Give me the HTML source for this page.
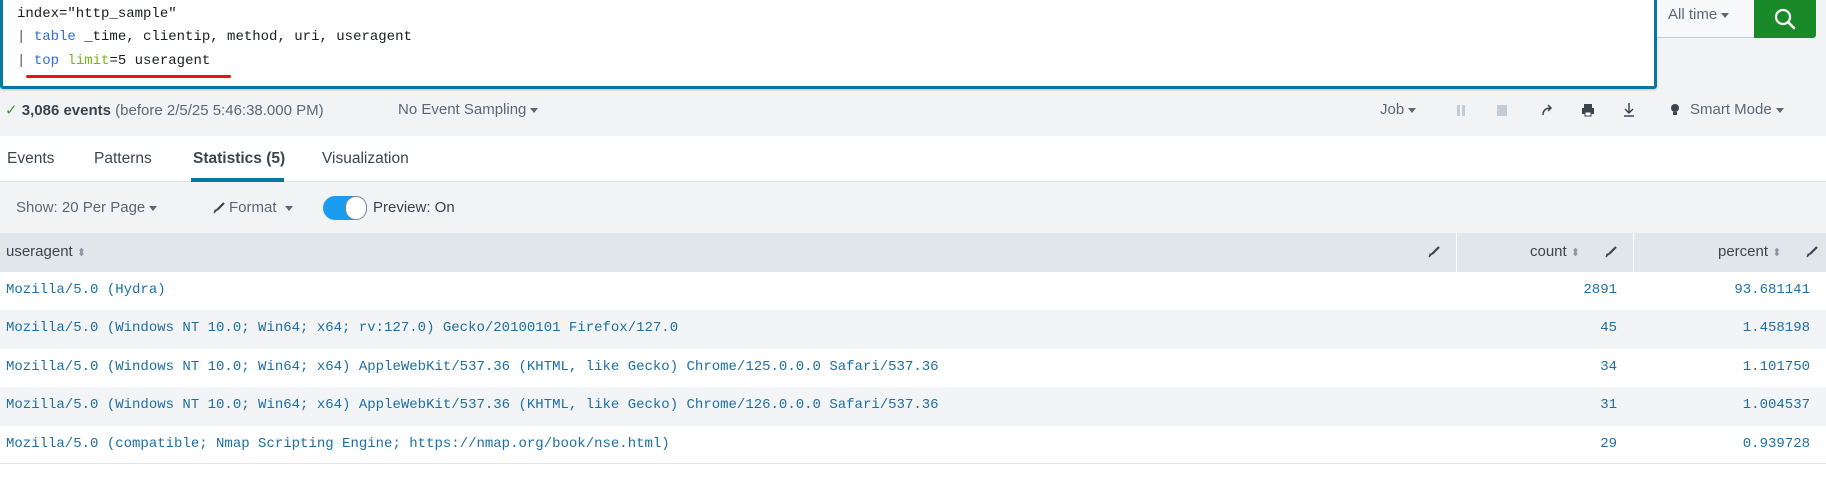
<!DOCTYPE html>
<html><head><meta charset="utf-8"><style>
*{box-sizing:border-box;margin:0;padding:0}
body{width:1826px;height:488px;overflow:hidden;background:#fff;font-family:"Liberation Sans",sans-serif;color:#3c444d;position:relative}
.abs{position:absolute;white-space:nowrap}
.mono{font-family:"Liberation Mono",monospace}
#top{position:absolute;left:0;top:0;width:1826px;height:136px;background:#f2f3f5}
#box{position:absolute;left:0;top:-4px;width:1657px;height:93px;background:#fff;border:3px solid #0877a6;border-radius:3px;box-shadow:0 1px 2px rgba(0,0,0,.2)}
.code{font-size:14px;color:#1a1c1e}
#tabs{position:absolute;top:136px;left:0;width:1826px;height:46px;background:#fff;border-bottom:1px solid #dfe3e6}
#tb{position:absolute;top:182px;left:0;width:1826px;height:51px;background:#f2f3f5}
#hdr{position:absolute;top:233px;left:0;width:1826px;height:39px;background:#e1e6eb}
.row{position:absolute;left:0;width:1826px;height:38.4px}
.alt{background:#f2f4f5}
.cell{font-family:"Liberation Mono",monospace;font-size:14px;color:#1d6fa5;position:absolute;top:10px}
.caret{display:inline-block;width:0;height:0;border-left:4px solid transparent;border-right:4px solid transparent;border-top:5px solid #3c444d;vertical-align:middle;margin-left:4px}
</style></head><body>
<div id="top"></div>
<div id="box"></div>
<div class="abs mono code" style="left:17px;top:6px">index="http_sample"</div>
<div class="abs mono code" style="left:17px;top:29px"><span style="color:#555">|</span> <span style="color:#2f6ed8">table</span> _time, clientip, method, uri, useragent</div>
<div class="abs mono code" style="left:17px;top:53px"><span style="color:#555">|</span> <span style="color:#2f6ed8">top</span> <span style="color:#7bb617">limit</span>=5 useragent</div>
<div class="abs" style="left:26px;top:75px;width:205px;height:3px;background:#ee1111;border-radius:2px"></div>
<div class="abs" style="left:1657px;top:0;width:97px;height:38px;background:#f7f8fa;border-bottom:1px solid #c3cbd4"></div>
<div class="abs" style="left:1668px;top:6px;font-size:15px;color:#5c6773">All time<span class="caret" style="border-top-color:#5c6773"></span></div>
<div class="abs" style="left:1754px;top:0;width:62px;height:38px;background:#1a8929;border-radius:0 0 3px 0"></div>
<svg class="abs" style="left:1773px;top:7px" width="24" height="24" viewBox="0 0 24 24"><circle cx="10" cy="10" r="7" fill="none" stroke="#fff" stroke-width="2.2"/><path d="M15 15l6 6" stroke="#fff" stroke-width="2.6" stroke-linecap="round"/></svg>

<div class="abs" style="left:5px;top:101px;font-size:15px;color:#5c6773"><span style="color:#3a9a3a">✓</span> <b style="color:#3c444d">3,086 events</b> (before 2/5/25 5:46:38.000 PM)</div>
<div class="abs" style="left:398px;top:101px;font-size:15px;color:#5c6773">No Event Sampling<span class="caret" style="border-top-color:#5c6773"></span></div>
<div class="abs" style="left:1380px;top:101px;font-size:15px;color:#5c6773">Job<span class="caret" style="border-top-color:#5c6773"></span></div>
<div class="abs" style="left:1457px;top:105px;width:3px;height:11px;background:#c3cbd4"></div>
<div class="abs" style="left:1462px;top:105px;width:3px;height:11px;background:#c3cbd4"></div>
<div class="abs" style="left:1497px;top:105px;width:10px;height:11px;background:#c3cbd4"></div>
<svg class="abs" style="left:1540px;top:103px" width="14" height="14" viewBox="0 0 14 14"><path d="M3 12c0-5 3-7 8-7M8 2l3 3-3 3" fill="none" stroke="#3c444d" stroke-width="1.5"/></svg>
<svg class="abs" style="left:1581px;top:103px" width="14" height="14" viewBox="0 0 14 14"><rect x="3" y="1" width="8" height="4" fill="#3c444d"/><rect x="1" y="5" width="12" height="6" fill="#3c444d"/><rect x="4" y="9" width="6" height="4" fill="#fff" stroke="#3c444d"/></svg>
<svg class="abs" style="left:1622px;top:102px" width="14" height="16" viewBox="0 0 14 16"><path d="M7 1v10M3 7l4 4 4-4M2 14h10" fill="none" stroke="#3c444d" stroke-width="1.5"/></svg>
<svg class="abs" style="left:1670px;top:103px" width="10" height="14" viewBox="0 0 10 14"><circle cx="5" cy="5" r="4" fill="#3c444d"/><rect x="3" y="9" width="4" height="3" fill="#3c444d"/></svg>
<div class="abs" style="left:1690px;top:101px;font-size:15px;color:#5c6773">Smart Mode<span class="caret" style="border-top-color:#5c6773"></span></div>

<div id="tabs"></div>
<div class="abs" style="left:7px;top:150px;font-size:15.5px">Events</div>
<div class="abs" style="left:94px;top:150px;font-size:15.5px">Patterns</div>
<div class="abs" style="left:193px;top:150px;font-size:15.5px;font-weight:bold">Statistics (5)</div>
<div class="abs" style="left:322px;top:150px;font-size:15.5px">Visualization</div>
<div class="abs" style="left:191px;top:178px;width:93px;height:4px;background:#0877a6"></div>

<div id="tb"></div>
<div class="abs" style="left:16px;top:199px;font-size:15px;color:#5c6773">Show: 20 Per Page<span class="caret" style="border-top-color:#5c6773"></span></div>
<svg class="abs" style="left:213px;top:202px" width="12" height="12" viewBox="0 0 12 12"><path d="M11 1L4 8" stroke="#3c444d" stroke-width="2.2"/><path d="M4 8l-3 3 1-3z" fill="#3c444d" stroke="#3c444d"/></svg>
<div class="abs" style="left:229px;top:199px;font-size:15px;color:#5c6773">Format <span class="caret" style="border-top-color:#5c6773"></span></div>
<div class="abs" style="left:323px;top:196px;width:44px;height:24px;border-radius:12px;background:#1a9cf0"></div>
<div class="abs" style="left:345px;top:196px;width:22px;height:24px;border-radius:12px;background:#fff;border:1px solid #7a8693"></div>
<div class="abs" style="left:373px;top:199px;font-size:15px;color:#3c444d">Preview: On</div>

<div id="hdr"></div>
<div class="abs" style="left:1456px;top:233px;width:1px;height:39px;background:#fff"></div>
<div class="abs" style="left:1633px;top:233px;width:1px;height:39px;background:#fff"></div>
<div class="abs" style="left:6px;top:243px;font-size:15px">useragent <span style="color:#8a95a0;font-size:11px">⬍</span></div>
<div class="abs" style="left:1530px;top:243px;font-size:15px">count <span style="color:#8a95a0;font-size:11px">⬍</span></div>
<div class="abs" style="left:1718px;top:243px;font-size:15px">percent <span style="color:#8a95a0;font-size:11px">⬍</span></div>
<svg class="abs" style="left:1428px;top:246px" width="12" height="12" viewBox="0 0 12 12"><path d="M11 1L4 8" stroke="#3c444d" stroke-width="2.2"/><path d="M4 8l-3 3 1-3z" fill="#3c444d" stroke="#3c444d"/></svg>
<svg class="abs" style="left:1605px;top:246px" width="12" height="12" viewBox="0 0 12 12"><path d="M11 1L4 8" stroke="#3c444d" stroke-width="2.2"/><path d="M4 8l-3 3 1-3z" fill="#3c444d" stroke="#3c444d"/></svg>
<svg class="abs" style="left:1806px;top:246px" width="12" height="12" viewBox="0 0 12 12"><path d="M11 1L4 8" stroke="#3c444d" stroke-width="2.2"/><path d="M4 8l-3 3 1-3z" fill="#3c444d" stroke="#3c444d"/></svg>

<div class="row" style="top:272px"><span class="cell" style="left:6px">Mozilla/5.0 (Hydra)</span><span class="cell" style="right:209px">2891</span><span class="cell" style="right:16px">93.681141</span></div>
<div class="row alt" style="top:310.4px"><span class="cell" style="left:6px">Mozilla/5.0 (Windows NT 10.0; Win64; x64; rv:127.0) Gecko/20100101 Firefox/127.0</span><span class="cell" style="right:209px">45</span><span class="cell" style="right:16px">1.458198</span></div>
<div class="row" style="top:348.8px"><span class="cell" style="left:6px">Mozilla/5.0 (Windows NT 10.0; Win64; x64) AppleWebKit/537.36 (KHTML, like Gecko) Chrome/125.0.0.0 Safari/537.36</span><span class="cell" style="right:209px">34</span><span class="cell" style="right:16px">1.101750</span></div>
<div class="row alt" style="top:387.2px"><span class="cell" style="left:6px">Mozilla/5.0 (Windows NT 10.0; Win64; x64) AppleWebKit/537.36 (KHTML, like Gecko) Chrome/126.0.0.0 Safari/537.36</span><span class="cell" style="right:209px">31</span><span class="cell" style="right:16px">1.004537</span></div>
<div class="row" style="top:425.6px;border-bottom:1px solid #e1e6eb"><span class="cell" style="left:6px">Mozilla/5.0 (compatible; Nmap Scripting Engine; https://nmap.org/book/nse.html)</span><span class="cell" style="right:209px">29</span><span class="cell" style="right:16px">0.939728</span></div>
</body></html>
